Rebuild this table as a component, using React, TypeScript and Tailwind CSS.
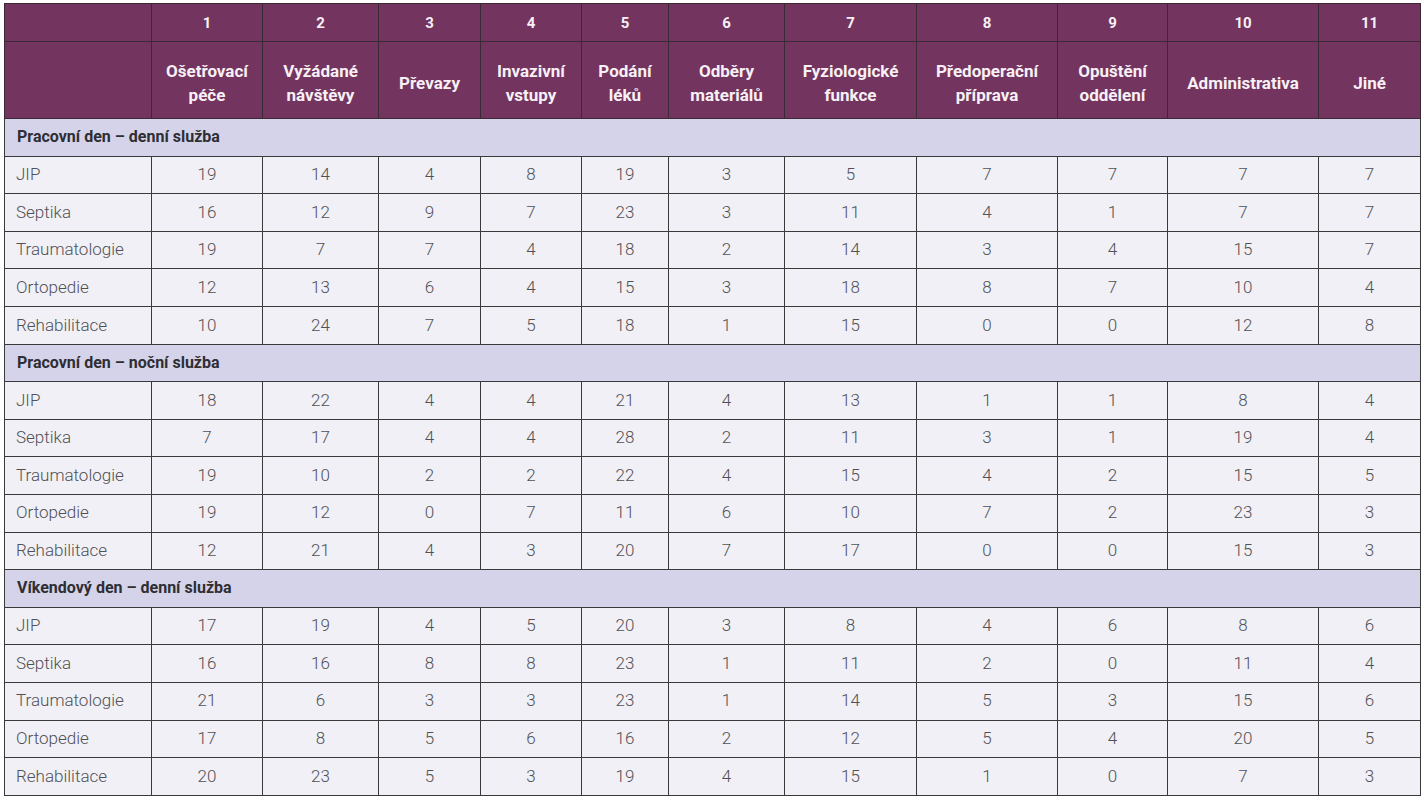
import React from 'react';

const widths = [147, 111, 116, 102, 101, 87, 116, 132, 141, 110, 151, 102];

const headers: string[][] = [
  ['Ošetřovací', 'péče'],
  ['Vyžádané', 'návštěvy'],
  ['Převazy'],
  ['Invazivní', 'vstupy'],
  ['Podání', 'léků'],
  ['Odběry', 'materiálů'],
  ['Fyziologické', 'funkce'],
  ['Předoperační', 'příprava'],
  ['Opuštění', 'oddělení'],
  ['Administrativa'],
  ['Jiné'],
];

type Section = { title: string; rows: [string, number[]][] };

const sections: Section[] = [
  {
    title: 'Pracovní den – denní služba',
    rows: [
      ['JIP', [19, 14, 4, 8, 19, 3, 5, 7, 7, 7, 7]],
      ['Septika', [16, 12, 9, 7, 23, 3, 11, 4, 1, 7, 7]],
      ['Traumatologie', [19, 7, 7, 4, 18, 2, 14, 3, 4, 15, 7]],
      ['Ortopedie', [12, 13, 6, 4, 15, 3, 18, 8, 7, 10, 4]],
      ['Rehabilitace', [10, 24, 7, 5, 18, 1, 15, 0, 0, 12, 8]],
    ],
  },
  {
    title: 'Pracovní den – noční služba',
    rows: [
      ['JIP', [18, 22, 4, 4, 21, 4, 13, 1, 1, 8, 4]],
      ['Septika', [7, 17, 4, 4, 28, 2, 11, 3, 1, 19, 4]],
      ['Traumatologie', [19, 10, 2, 2, 22, 4, 15, 4, 2, 15, 5]],
      ['Ortopedie', [19, 12, 0, 7, 11, 6, 10, 7, 2, 23, 3]],
      ['Rehabilitace', [12, 21, 4, 3, 20, 7, 17, 0, 0, 15, 3]],
    ],
  },
  {
    title: 'Víkendový den – denní služba',
    rows: [
      ['JIP', [17, 19, 4, 5, 20, 3, 8, 4, 6, 8, 6]],
      ['Septika', [16, 16, 8, 8, 23, 1, 11, 2, 0, 11, 4]],
      ['Traumatologie', [21, 6, 3, 3, 23, 1, 14, 5, 3, 15, 6]],
      ['Ortopedie', [17, 8, 5, 6, 16, 2, 12, 5, 4, 20, 5]],
      ['Rehabilitace', [20, 23, 5, 3, 19, 4, 15, 1, 0, 7, 3]],
    ],
  },
];

const App: React.FC = () => {
  return (
    <div className="min-h-screen bg-white pt-[3px] pl-[4px] font-['Roboto',sans-serif]">
      <table className="table-fixed border-collapse w-[1416px]">
        <colgroup>
          {widths.map((w, i) => (
            <col key={i} style={{ width: w }} />
          ))}
        </colgroup>
        <thead>
          {/* Column numbers */}
          <tr className="h-[38px] bg-[#73345f] text-[#f7f0f5]">
            <th className="border border-[#3a2a35]" />
            {headers.map((_, i) => (
              <th key={i} className="border border-[#3a2a35] text-[15px] font-bold text-center pt-[2px]">
                {i + 1}
              </th>
            ))}
          </tr>
          {/* Column titles */}
          <tr className="h-[77px] bg-[#73345f] text-[#f7f0f5]">
            <th className="border border-[#3a2a35]" />
            {headers.map((lines, i) => (
              <th key={i} className="border border-[#3a2a35] text-[17px] font-bold text-center leading-[24px] pt-[5px] px-1">
                {lines.map((l, j) => (
                  <div key={j}>{l}</div>
                ))}
              </th>
            ))}
          </tr>
        </thead>
        <tbody>
          {sections.map((s) => (
            <React.Fragment key={s.title}>
              <tr className="h-[37.6px] bg-[#d5d3ea]">
                <td colSpan={12} className="border border-[#3a3a3a] pl-[12px] text-[16px] font-bold text-[#2e2e33]">
                  {s.title}
                </td>
              </tr>
              {s.rows.map(([label, vals]) => (
                <tr key={s.title + label} className="h-[37.6px] bg-[#f1f0f6] text-[#505055]">
                  <td className="border border-[#3a3a3a] pl-[11px] text-[17px] font-light">{label}</td>
                  {vals.map((v, i) => (
                    <td key={i} className="border border-[#3a3a3a] text-center text-[17px] font-light">
                      {v}
                    </td>
                  ))}
                </tr>
              ))}
            </React.Fragment>
          ))}
        </tbody>
      </table>
    </div>
  );
};

export default App;
